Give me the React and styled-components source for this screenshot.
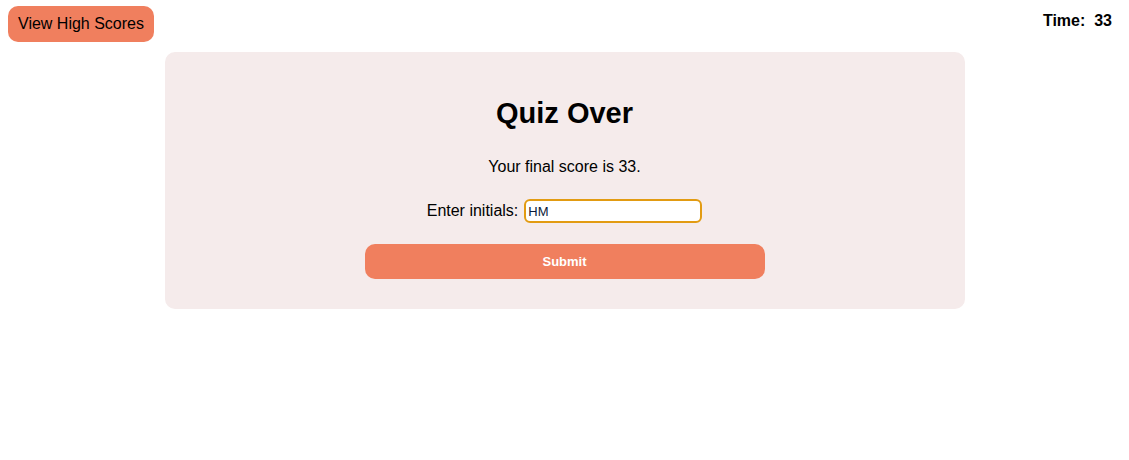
import React from 'react';
import styled, { createGlobalStyle } from 'styled-components';

const GlobalStyle = createGlobalStyle`
	body {
		margin: 0;
		font-family: 'Liberation Sans', Arial, sans-serif;
		background: #ffffff;
		color: #000000;
	}
`;

const Header = styled.header`
	display: flex;
	justify-content: space-between;
	align-items: center;
	padding: 6px 17px 0 8px;
	height: 36px;
`;

const ScoresButton = styled.button`
	height: 36px;
	padding: 0 10px;
	border: none;
	border-radius: 10px;
	background: #f07f5e;
	color: #000000;
	font-family: inherit;
	font-size: 16px;
	cursor: pointer;
`;

const Timer = styled.div`
	font-weight: bold;
	font-size: 16px;
	white-space: pre;
	margin-top: -6px;
`;

const Card = styled.main`
	width: 800px;
	margin: 10px auto 0;
	box-sizing: border-box;
	padding: 45px 0 30px;
	background: #f5ebeb;
	border-radius: 10px;
	display: flex;
	flex-direction: column;
	align-items: center;
`;

const Title = styled.h1`
	margin: 0;
	font-size: 29px;
	line-height: 33px;
`;

const Score = styled.p`
	margin: 28px 0 0;
	font-size: 16px;
	line-height: 18px;
`;

const Form = styled.form`
	display: flex;
	flex-direction: column;
	align-items: center;
	margin-top: 23px;
`;

const Row = styled.label`
	display: flex;
	align-items: center;
	gap: 6px;
	font-size: 16px;
`;

const Input = styled.input`
	width: 178px;
	height: 24px;
	box-sizing: border-box;
	border: 2px solid #e29b12;
	border-radius: 6px;
	padding: 0 2px;
	font-family: inherit;
	font-size: 13px;
	color: #0a1a3a;
	outline: none;
	background: #ffffff;
`;

const Submit = styled.button`
	margin-top: 21px;
	width: 400px;
	height: 35px;
	border: none;
	border-radius: 10px;
	background: #f07f5e;
	color: #ffffff;
	font-family: inherit;
	font-weight: bold;
	font-size: 13px;
	cursor: pointer;
`;

const App = () => (
	<React.Fragment>
		<GlobalStyle />
		<Header>
			<ScoresButton>View High Scores</ScoresButton>
			<Timer>Time:  33</Timer>
		</Header>
		<Card>
			<Title>Quiz Over</Title>
			<Score>Your final score is 33.</Score>
			<Form onSubmit={(e) => e.preventDefault()}>
				<Row>
					Enter initials:
					<Input defaultValue="HM" />
				</Row>
				<Submit type="submit">Submit</Submit>
			</Form>
		</Card>
	</React.Fragment>
);

export default App;
